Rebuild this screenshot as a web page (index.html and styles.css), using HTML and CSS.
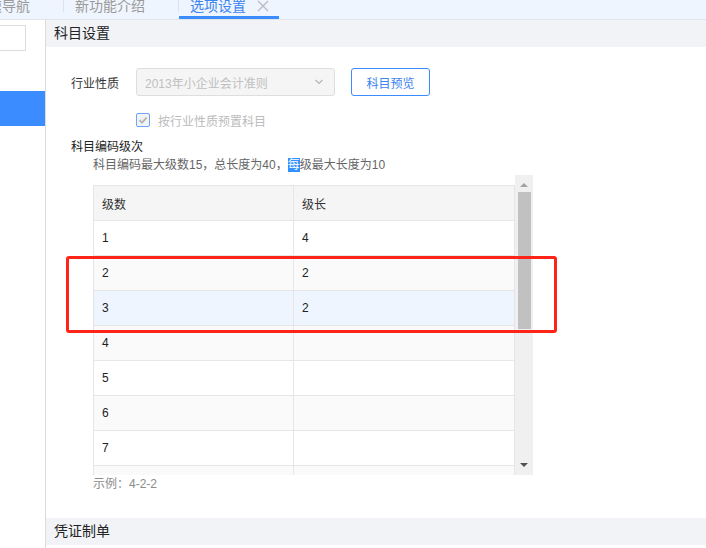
FILE: index.html
```
<!DOCTYPE html>
<html lang="zh-CN">
<head>
<meta charset="utf-8">
<link rel="stylesheet" href="styles.css">
</head>
<body>
<div class="tabs">
  <div class="tab tab-first"><span class="tab-label">快速导航</span><span class="tab-close hidden"></span></div>
  <div class="tab-sep"></div>
  <div class="tab"><span class="tab-label">新功能介绍</span><span class="tab-close hidden"></span></div>
  <div class="tab-sep"></div>
  <div class="tab active"><span class="tab-label">选项设置</span>
    <svg class="tab-close" width="12" height="12" viewBox="0 0 12 12"><path d="M1 1L11 11M11 1L1 11" stroke="#b9bcc2" stroke-width="1.4" fill="none"/></svg>
  </div>
</div>
<div class="layout">
  <div class="sidebar">
    <div class="side-input"></div>
    <div class="side-active"></div>
  </div>
  <div class="main">
    <div class="sec-head">科目设置</div>
    <div class="sec-body">
      <div class="form-row">
        <span class="label">行业性质</span>
        <div class="select">
          <span>2013年小企业会计准则</span>
          <svg width="10" height="6" viewBox="0 0 10 6"><path d="M1.5 1L5 4.5L8.5 1" stroke="#b5b5b5" stroke-width="1.2" fill="none"/></svg>
        </div>
        <button class="btn">科目预览</button>
      </div>
      <div class="check-row">
        <span class="checkbox">
          <svg width="12" height="12" viewBox="0 0 12 12"><path d="M2.5 6.2L5 8.6L9.6 3.6" stroke="#b4b4b4" stroke-width="1.8" fill="none"/></svg>
        </span>
        <span class="check-label">按行业性质预置科目</span>
      </div>
      <div class="sub-title">科目编码级次</div>
      <div class="desc">科目编码最大级数15，总长度为40，<span class="sel">每</span>级最大长度为10</div>
      <div class="grid">
        <div class="grid-view">
          <table class="tbl">
            <thead><tr><th class="c1">级数</th><th>级长</th></tr></thead>
            <tbody>
              <tr><td>1</td><td>4</td></tr>
              <tr class="alt"><td>2</td><td>2</td></tr>
              <tr class="hover"><td>3</td><td>2</td></tr>
              <tr class="alt"><td>4</td><td></td></tr>
              <tr><td>5</td><td></td></tr>
              <tr class="alt"><td>6</td><td></td></tr>
              <tr><td>7</td><td></td></tr>
              <tr class="alt"><td></td><td></td></tr>
            </tbody>
          </table>
        </div>
        <div class="scrollbar">
          <svg class="arrow" width="18" height="14" viewBox="0 0 18 14"><path d="M5 9L9 5L13 9Z" fill="#a3a3a3"/></svg>
          <div class="thumb"></div>
          <div class="track-rest"></div>
          <svg class="arrow" width="18" height="14" viewBox="0 0 18 14"><path d="M5 5L9 9L13 5Z" fill="#505050"/></svg>
        </div>
      </div>
      <div class="example">示例：4-2-2</div>
    </div>
    <div class="sec-head">凭证制单</div>
  </div>
</div>
<div class="mark"></div>
</body>
</html>
```
FILE: styles.css
```
* { box-sizing: border-box; }
html, body { margin: 0; padding: 0; }
body {
  width: 706px;
  height: 548px;
  overflow: hidden;
  font-family: "Liberation Sans", "Noto Sans CJK SC", sans-serif;
  color: #333;
  background: #fff;
  position: relative;
}
.tabs {
  height: 20px;
  background: #eff5fe;
  border-bottom: 1px solid #e1e5ea;
  display: flex;
  align-items: flex-start;
  overflow: hidden;
}
.tab {
  height: 19px;
  display: flex;
  align-items: flex-start;
  padding: 0 10px 0 11px;
  position: relative;
  font-size: 14px;
  color: #9a9a9a;
}
.tab-first { margin-left: -37px; }
.tab-label {
  line-height: 14px;
  margin-top: -1px;
  white-space: nowrap;
}
.tab-close {
  width: 12px;
  height: 12px;
  margin-left: 11px;
  margin-top: 0;
  flex: none;
}
.tab.active { color: #3b84f0; }
.tab.active::after {
  content: "";
  position: absolute;
  left: 0;
  right: 0;
  bottom: 0;
  height: 3px;
  background: #3b8cfe;
}
.tab-sep {
  width: 1px;
  height: 12px;
  background: #dfe3e8;
  flex: none;
}
.layout {
  display: flex;
  height: 528px;
}
.sidebar {
  width: 46px;
  border-right: 1px solid #dcdcdc;
  padding-top: 5px;
  flex: none;
}
.side-input {
  width: 26px;
  height: 26px;
  border: 1px solid #dcdcdc;
  border-left: none;
  background: #fff;
}
.side-active {
  margin-top: 40px;
  height: 35px;
  width: 45px;
  background: #3b8cfe;
}
.main { flex: 1; }
.sec-head {
  height: 27px;
  line-height: 27px;
  background: #f2f3f7;
  padding-left: 8px;
  font-size: 14px;
  color: #222;
}
.sec-body {
  padding: 21px 0 26px 25px;
  font-size: 12px;
}
.form-row {
  display: flex;
  align-items: center;
  height: 28px;
}
.label {
  width: 65px;
  color: #333;
}
.select {
  width: 199px;
  height: 28px;
  border: 1px solid #dedede;
  border-radius: 3px;
  background: #f5f5f5;
  color: #c0c0c0;
  display: flex;
  align-items: center;
  justify-content: space-between;
  padding: 0 10px 0 8px;
}
.btn {
  margin-left: 16px;
  width: 79px;
  height: 28px;
  border: 1px solid #3b8cfe;
  border-radius: 3px;
  background: #fff;
  color: #3b84f0;
  font-family: inherit;
  font-size: 12px;
  padding: 0;
}
.check-row {
  display: flex;
  align-items: center;
  height: 20px;
  margin-top: 14px;
  margin-left: 65px;
}
.checkbox {
  width: 14px;
  height: 14px;
  border: 1px solid #6aa6fb;
  border-radius: 2px;
  background: #f3f3f3;
  display: flex;
  align-items: center;
  justify-content: center;
}
.check-label {
  margin-left: 8px;
  color: #bcbcbc;
}
.sub-title {
  margin-top: 9px;
  line-height: 16px;
  color: #222;
}
.desc {
  margin-left: 22px;
  margin-top: 2px;
  line-height: 16px;
  color: #666;
}
.sel { background: #3390ff; color: #fff; }
.grid {
  margin-left: 22px;
  margin-top: 2px;
  width: 440px;
  height: 300px;
  display: flex;
}
.grid-view {
  width: 422px;
  height: 300px;
  overflow: hidden;
  padding-top: 10px;
}
.tbl {
  width: 422px;
  border-collapse: collapse;
  font-size: 12px;
  color: #222;
}
.tbl th, .tbl td {
  height: 35px;
  border: 1px solid #e6e6e6;
  text-align: left;
  font-weight: normal;
  padding: 0 0 0 8px;
}
.tbl th { background: #f5f5f5; color: #333; }
.tbl .c1 { width: 200px; }
.tbl tr.alt td { background: #fafafa; }
.tbl tr.hover td { background: #eef5fe; }
.scrollbar {
  width: 18px;
  height: 300px;
  background: #f0f0f0;
  display: flex;
  flex-direction: column;
  align-items: center;
}
.arrow { flex: none; display: block; margin-top: 3px; }
.thumb {
  width: 13px;
  height: 137px;
  background: #c1c1c1;
  margin-top: 0;
}
.track-rest { flex: 1; }
.scrollbar .arrow:last-child { margin-top: 0; margin-bottom: 3px; }
.example {
  margin-left: 22px;
  margin-top: 1px;
  line-height: 16px;
  color: #8c8c8c;
}
.mark {
  position: absolute;
  left: 66px;
  top: 256px;
  width: 491px;
  height: 77px;
  border: 3px solid #ff2418;
  border-radius: 3px;
}
```
